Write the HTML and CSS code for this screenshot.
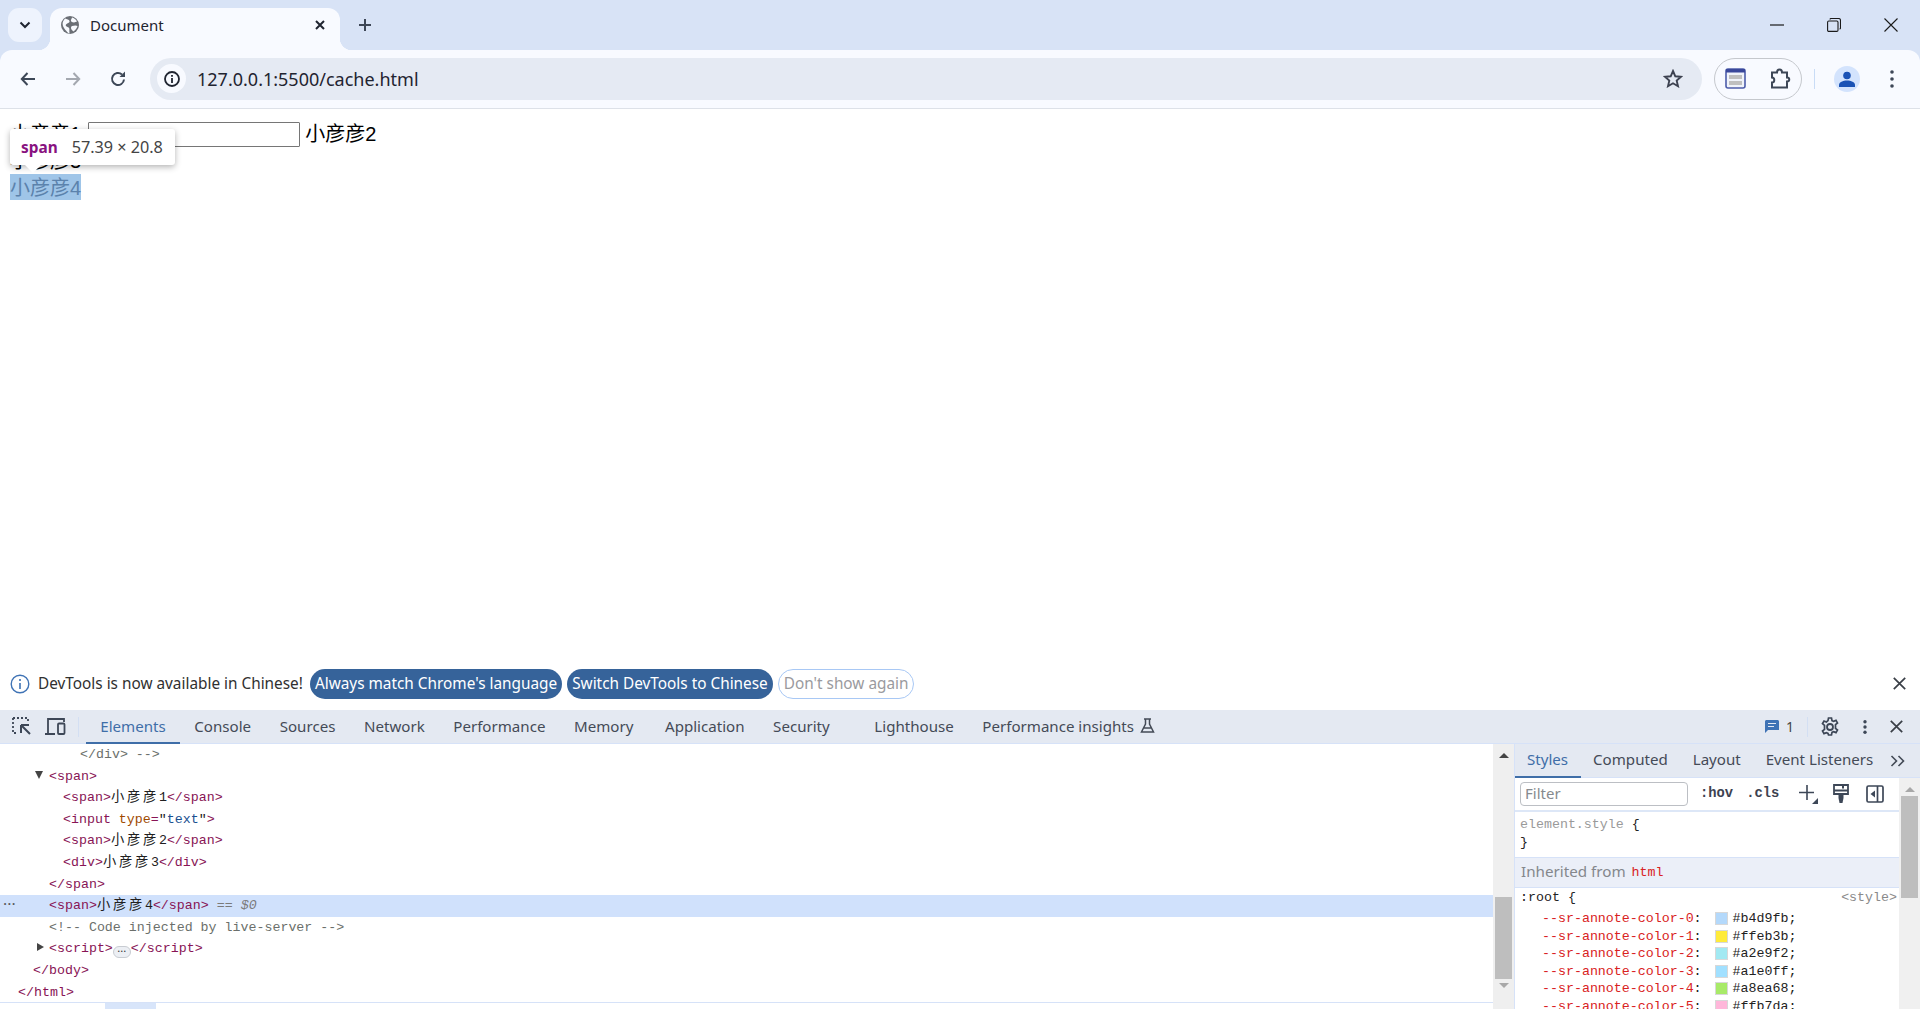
FILE: index.html
```html
<!DOCTYPE html>
<html lang="en">
<head>
<meta charset="utf-8">
<title>Document</title>
<link rel="stylesheet" href="styles.css">
</head>
<body>
<div class="app">
  <header class="tabstrip">
    <button class="tabsearch"><svg width="12" height="8" viewBox="0 0 12 8"><path d="M1.500 1.500 6 6l4.500-4.500" fill="none" stroke="#1f2430" stroke-width="2"/></svg></button>
    <div class="tab">
      <svg class="favicon" width="18" height="18" viewBox="0 0 18 18"><circle cx="9" cy="9" r="9" fill="#6b6f76"/><path d="M4 2.500c2 1 4 .5 4.500 2.500S6 7 5 8.500 6 11 7.500 11.500 8 15 8.500 17 5 15 3 12 1 6 4 2.500zM11 1.500c2 .5 4 2 5 4l-3 1c-2 0-3.500-1-3-2.500s1-1.500 1-2.500zM11 10c2-.5 4-1 5.500 0-.5 2-2 4-4 5.500-1-1-2.500-2-2.500-3.500s.5-1.500 1-2z" fill="#f8faff"/></svg>
      <span class="tabtitle">Document</span>
      <svg class="tabclose" width="10" height="10" viewBox="0 0 10 10"><path d="M1 1l8 8M9 1l-8 8" stroke="#1f2430" stroke-width="2"/></svg>
    </div>
    <svg class="newtab" width="14" height="14" viewBox="0 0 14 14"><path d="M7 1v12M1 7h12" stroke="#3d4757" stroke-width="2"/></svg>
    <div class="winctl">
      <svg width="14" height="2" viewBox="0 0 14 2"><path d="M0 1h14" stroke="#1a1a1a" stroke-width="1.200"/></svg>
      <svg width="14" height="14" viewBox="0 0 14 14"><rect x=".6" y="3" width="10.400" height="10.400" rx="1.200" fill="none" stroke="#1a1a1a" stroke-width="1.100"/><path d="M3 1.500c0-.5.500-1 1-1h7.500c1 0 2 1 2 2V10c0 .5-.5 1-1 1" fill="none" stroke="#1a1a1a" stroke-width="1.100"/></svg>
      <svg width="14" height="14" viewBox="0 0 14 14"><path d="M.5.500l13 13M13.500.500l-13 13" stroke="#1a1a1a" stroke-width="1.100"/></svg>
    </div>
  </header>
  <nav class="toolbar">
    <svg class="navicon" width="16" height="14" viewBox="0 0 16 14"><path d="M15 7H2M7.500 1 1.800 7l5.700 6" fill="none" stroke="#3d4757" stroke-width="2"/></svg>
    <svg class="navicon" width="16" height="14" viewBox="0 0 16 14"><path d="M1 7h13M8.500 1l5.700 6-5.700 6" fill="none" stroke="#a4a8b0" stroke-width="2"/></svg>
    <svg class="navicon" width="16" height="16" viewBox="0 0 16 16"><path d="M14 8.500A6 6 0 1 1 12 3.500" fill="none" stroke="#3d4757" stroke-width="2"/><path d="M9.500 6H15V.5z" fill="#3d4757"/></svg>
    <div class="omnibox">
      <span class="siteinfo"><svg width="16" height="16" viewBox="0 0 16 16"><circle cx="8" cy="8" r="7" fill="none" stroke="#1f2430" stroke-width="1.800"/><path d="M8 7v5M8 4v1.800" stroke="#1f2430" stroke-width="1.800"/></svg></span>
      <span class="url">127.0.0.1:5500/cache.html</span>
      <svg class="star" width="20" height="19" viewBox="0 0 20 19"><path d="M10 2l2.300 5.300 5.700.5-4.300 3.800 1.300 5.600L10 14.300 5 17.200l1.300-5.600L2 7.800l5.700-.5z" fill="none" stroke="#3d4250" stroke-width="1.900"/></svg>
    </div>
    <div class="extpill">
      <svg width="21" height="21" viewBox="0 0 21 21"><rect x="1" y="1" width="19" height="19" rx="2" fill="#f0f3fa" stroke="#4d5dab" stroke-width="1.600"/><rect x="1" y="1" width="19" height="3.500" fill="#39479a"/><rect x="4" y="7" width="13" height="4" fill="#bfbfbf"/><rect x="4" y="13" width="13" height="4" fill="#bfbfbf"/></svg>
      <svg width="22" height="21" viewBox="0 0 22 21"><path d="M2 4.500h5c0-4 5-4 5 0h5v5c3 0 3 4 0 4v6H2v-5c3 0 3-5 0-5z" fill="none" stroke="#3d4757" stroke-width="2"/></svg>
    </div>
    <span class="tooldivider"></span>
    <span class="avatar"><svg width="16" height="16" viewBox="0 0 16 16"><circle cx="8" cy="4.500" r="3.800" fill="#1a52b5"/><path d="M0 16v-2c0-3 4-4.500 8-4.500s8 1.500 8 4.500v2z" fill="#1a52b5"/></svg></span>
    <svg class="kebab" width="4" height="18" viewBox="0 0 4 18"><circle cx="2" cy="2" r="1.800" fill="#3d4757"/><circle cx="2" cy="9" r="1.800" fill="#3d4757"/><circle cx="2" cy="16" r="1.800" fill="#3d4757"/></svg>
  </nav>
  <main class="page">
    <div class="pageline first"><span>小彦彦1</span> <input class="pageinput" type="text"> <span>小彦彦2</span></div>
    <div class="pageline">小彦彦3</div>
    <div class="pageline"><span class="picked">小彦彦4</span></div>
    <div class="tip"><b>span</b><span>57.39 × 20.8</span></div>
  </main>
  <section class="infobar">
    <svg class="infoicon" width="20" height="20" viewBox="0 0 20 20"><circle cx="10" cy="10" r="8.800" fill="none" stroke="#3f73b5" stroke-width="1.400"/><path d="M10 9v6M10 5v2" stroke="#3f73b5" stroke-width="1.600"/></svg>
    <span class="infotext">DevTools is now available in Chinese!</span>
    <button class="pillbtn primary">Always match Chrome's language</button>
    <button class="pillbtn primary">Switch DevTools to Chinese</button>
    <button class="pillbtn ghost">Don't show again</button>
    <svg class="infoclose" width="13" height="13" viewBox="0 0 13 13"><path d="M.8.800l11.400 11.400M12.200.800.800 12.200" stroke="#3a3f47" stroke-width="1.700"/></svg>
  </section>
  <section class="devtabs">
    <svg class="dticon" width="19" height="19" viewBox="0 0 19 19"><path d="M1 1h15v5M1 1v15h5" fill="none" stroke="#3d4757" stroke-width="1.800" stroke-dasharray="2 2"/><path d="M9 8h8M9 8v8M9 8l9 9" fill="none" stroke="#3d4757" stroke-width="2"/></svg>
    <svg class="dticon second" width="21" height="19" viewBox="0 0 21 19"><path d="M0 17h10M3 16V2h16v3" fill="none" stroke="#3d4757" stroke-width="1.800"/><rect x="13" y="6.500" width="6.500" height="10.500" rx="1" fill="none" stroke="#3d4757" stroke-width="1.800"/></svg>
    <span class="dtdivider"></span>
    <div class="tablist">
      <span class="dtab active">Elements</span>
      <span class="dtab">Console</span>
      <span class="dtab">Sources</span>
      <span class="dtab">Network</span>
      <span class="dtab">Performance</span>
      <span class="dtab">Memory</span>
      <span class="dtab application">Application</span>
      <span class="dtab">Security</span>
      <span class="dtab wide">Lighthouse</span>
      <span class="dtab">Performance insights
        <svg class="flask" width="15" height="15" viewBox="0 0 15 15"><path d="M4 1h7M5.500 1v5L1.500 14h12L9.500 6V1M4 10h7" fill="none" stroke="#444b57" stroke-width="1.500"/></svg>
      </span>
    </div>
    <div class="dtright">
      <svg width="14" height="13" viewBox="0 0 14 13"><path d="M0 1.500C0 .7.700 0 1.500 0h11c.8 0 1.500.7 1.500 1.500V10H3l-3 3z" fill="#3f73b5"/><path d="M3 3.500h8M3 6.500h6" stroke="#e4e9f2" stroke-width="1.200"/></svg>
      <span class="issuecount">1</span>
      <span class="dtdivider r"></span>
      <svg class="gear" width="20" height="20" viewBox="0 0 20 20"><circle cx="10" cy="10" r="3" fill="none" stroke="#3d4757" stroke-width="1.800"/><path d="M8.500 1h3l.5 2.600 1.600.8 2.400-1 1.500 2.600-2 1.700v3.600l2 1.700-1.500 2.600-2.400-1-1.600.8-.5 2.600h-3L8 16.400l-1.600-.8-2.400 1-1.500-2.600 2-1.700V8.300l-2-1.700L4 4l2.400 1L8 3.600z" fill="none" stroke="#3d4757" stroke-width="1.700"/></svg>
      <svg class="dots" width="4" height="14" viewBox="0 0 4 14"><circle cx="2" cy="1.800" r="1.700" fill="#3d4757"/><circle cx="2" cy="7" r="1.700" fill="#3d4757"/><circle cx="2" cy="12.200" r="1.700" fill="#3d4757"/></svg>
      <svg class="dtclose" width="13" height="13" viewBox="0 0 13 13"><path d="M.8.800l11.400 11.400M12.200.800.800 12.200" stroke="#3a3f47" stroke-width="1.700"/></svg>
    </div>
  </section>
  <section class="devmain">
    <div class="elements">
      <div class="tree">
        <div class="row l4"><span class="cm">&lt;/div&gt; --&gt;</span></div>
        <div class="row l2"><i class="tri down"></i><span class="tg">&lt;span&gt;</span></div>
        <div class="row l3"><span class="tg">&lt;span&gt;</span><span class="cjk">小彦彦</span>1<span class="tg">&lt;/span&gt;</span></div>
        <div class="row l3"><span class="tg">&lt;input </span><span class="at">type</span><span class="tg">=</span>"<span class="vl">text</span>"<span class="tg">&gt;</span></div>
        <div class="row l3"><span class="tg">&lt;span&gt;</span><span class="cjk">小彦彦</span>2<span class="tg">&lt;/span&gt;</span></div>
        <div class="row l3"><span class="tg">&lt;div&gt;</span><span class="cjk">小彦彦</span>3<span class="tg">&lt;/div&gt;</span></div>
        <div class="row l2"><span class="tg">&lt;/span&gt;</span></div>
        <div class="row l2 selected"><span class="rowdots">•••</span><span class="tg">&lt;span&gt;</span><span class="cjk">小彦彦</span>4<span class="tg">&lt;/span&gt;</span><span class="eq"> == $0</span></div>
        <div class="row l2"><span class="cm">&lt;!-- Code injected by live-server --&gt;</span></div>
        <div class="row l2"><i class="tri right"></i><span class="tg">&lt;script&gt;</span><span class="more">•••</span><span class="tg">&lt;/script&gt;</span></div>
        <div class="row l1"><span class="tg">&lt;/body&gt;</span></div>
        <div class="row l0"><span class="tg">&lt;/html&gt;</span></div>
      </div>
      <div class="breadcrumb"><span class="crumb"></span></div>
    </div>
    <div class="vscroll">
      <i class="up"></i>
      <span class="vtrack"><span class="vthumb"></span></span>
      <i class="dn"></i>
    </div>
    <aside class="sidebar">
      <div class="sidetabs">
        <span class="stab active">Styles</span>
        <span class="stab">Computed</span>
        <span class="stab">Layout</span>
        <span class="stab">Event Listeners</span>
        <svg class="chev" width="16" height="12" viewBox="0 0 16 12"><path d="M1.500 1l5 5-5 5M8.500 1l5 5-5 5" fill="none" stroke="#444b57" stroke-width="1.600"/></svg>
      </div>
      <div class="sidebody">
        <div class="stylespane">
          <div class="filterbar">
            <span class="filter">Filter</span>
            <span class="hov">:hov</span>
            <span class="cls">.cls</span>
            <svg class="plus" width="20" height="20" viewBox="0 0 20 20"><path d="M8 1v15M0 8.500h15" stroke="#3d4757" stroke-width="1.600"/><path d="M19 14v6h-6z" fill="#3d4757"/></svg>
            <svg class="brush" width="16" height="19" viewBox="0 0 16 19"><path d="M1 1h14v9H1z" fill="none" stroke="#3d4757" stroke-width="1.800"/><path d="M1 6.500h14" stroke="#3d4757" stroke-width="2"/><path d="M10 1v3.500" stroke="#3d4757" stroke-width="2"/><path d="M5.500 10h5v4l-1 5h-3l-1-5z" fill="#3d4757"/></svg>
            <svg class="sideicon" width="18" height="18" viewBox="0 0 18 18"><rect x="1" y="1" width="16" height="16" rx="1.500" fill="none" stroke="#3d4757" stroke-width="1.700"/><path d="M11.500 1v16" stroke="#3d4757" stroke-width="1.700"/><path d="M9 5.500v7L4.500 9z" fill="#3d4757"/></svg>
          </div>
          <div class="rule first"><div><span class="sel">element.style</span> {</div><div>}</div></div>
          <div class="inherited">Inherited from <span class="mono">html</span></div>
          <div class="rule root">
            <div class="rulehead"><span>:root {</span><span class="src">&lt;style&gt;</span></div>
            <div class="prop"><span class="pn">--sr-annote-color-0</span>: <i class="sw c0"></i>#b4d9fb;</div>
            <div class="prop"><span class="pn">--sr-annote-color-1</span>: <i class="sw c1"></i>#ffeb3b;</div>
            <div class="prop"><span class="pn">--sr-annote-color-2</span>: <i class="sw c2"></i>#a2e9f2;</div>
            <div class="prop"><span class="pn">--sr-annote-color-3</span>: <i class="sw c3"></i>#a1e0ff;</div>
            <div class="prop"><span class="pn">--sr-annote-color-4</span>: <i class="sw c4"></i>#a8ea68;</div>
            <div class="prop"><span class="pn">--sr-annote-color-5</span>: <i class="sw c5"></i>#ffb7da;</div>
          </div>
        </div>
        <div class="sscroll">
          <i class="up light"></i>
          <span class="sthumb"></span>
        </div>
      </div>
    </aside>
  </section>
</div>
</body>
</html>
```
FILE: styles.css
```css
* { box-sizing: border-box; }
html, body { margin: 0; height: 100%; overflow: hidden; }
body { font-family: "Noto Sans", "Noto Sans CJK SC", sans-serif; background: #d8e3f6; color: #1f1f1f; }
button { font: inherit; border: 0; padding: 0; }
svg { display: block; flex: none; }
i { font-style: normal; }
.app { display: flex; flex-direction: column; height: 1009px; }

.tabstrip { height: 50px; display: flex; align-items: flex-start; padding: 8px 0 0 8px; flex: none; }
.tabsearch { width: 34px; height: 34px; border-radius: 11px; background: #eef3fd; display: flex; align-items: center; justify-content: center; }
.tab { margin-left: 8px; width: 290px; height: 42px; background: #f8faff; border-radius: 12px 12px 0 0; display: flex; align-items: center; padding: 0 0 8px 11px; position: relative; }
.tab::before, .tab::after { content: ""; position: absolute; bottom: 0; width: 12px; height: 12px; }
.tab::before { left: -12px; background: radial-gradient(circle at 0 0, transparent 12px, #f8faff 12.500px); }
.tab::after { right: -12px; background: radial-gradient(circle at 100% 0, transparent 12px, #f8faff 12.500px); }
.tabtitle { margin-left: 11px; font-size: 15px; color: #1f2430; flex: 1; }
.tabclose { margin-right: 15px; }
.newtab { margin: 10px 0 0 18px; }
.winctl { margin-left: auto; display: flex; align-items: center; gap: 43px; padding: 10px 22px 0 0; }

.toolbar { height: 59px; flex: none; background: #f8faff; border-radius: 12px 12px 0 0; border-bottom: 1px solid #dde1e8; display: flex; align-items: center; padding: 0 19px 1px 20px; }
.navicon { margin-right: 29px; }
.navicon + .navicon + .navicon { margin-right: 24px; }
.omnibox { width: 1552px; height: 42px; border-radius: 21px; background: #e5eaf3; display: flex; align-items: center; padding: 0 19px 0 7px; }
.siteinfo { width: 29px; height: 29px; border-radius: 50%; background: #f8faff; display: flex; align-items: center; justify-content: center; }
.url { margin-left: 11px; font-size: 18px; color: #1f2430; flex: 1; }
.extpill { margin-left: 12px; width: 88px; height: 42px; border: 1.500px solid #c5c8cd; border-radius: 21px; display: flex; align-items: center; justify-content: space-between; padding: 0 9px 0 10px; }
.tooldivider { width: 1px; height: 20px; background: #c9dcf6; margin-left: 12px; }
.avatar { margin-left: 19px; width: 26px; height: 26px; border-radius: 50%; background: #d3e3fd; display: flex; align-items: center; justify-content: center; overflow: hidden; }
.kebab { margin-left: 30px; }

.page { flex: 1; min-height: 0; background: #fff; padding: 12px 10px 0; color: #000; font-size: 20px; position: relative; font-family: "Liberation Sans", "Noto Sans CJK SC", sans-serif; }
.pageline { height: 26px; line-height: 26px; }
.pageline.first { height: 27px; }
.pageinput { width: 212px; height: 25px; border: 1px solid #767676; border-radius: 1px; background: #fff; padding: 0; margin: 1px 0 0 1px; vertical-align: top; }
.picked { display: inline-block; background: #9fc5e8; color: #5b82ac; height: 26px; line-height: 28px; vertical-align: top; }
.tip { position: absolute; left: 10px; top: 20px; width: 165px; height: 36px; background: #fff; border-radius: 3px; box-shadow: 0 2px 6px rgba(0,0,0,.3); display: flex; align-items: center; gap: 14px; padding: 0 0 0 11px; font-size: 15.400px; font-family: "Noto Sans", sans-serif; color: #444; }
.tip span { font-size: 16.200px; }
.tip::after { content: ""; position: absolute; left: 15px; top: 36px; border: 8px solid transparent; border-top-color: #fff; border-bottom: 0; }
.tip b { color: #881280; font-weight: 700; }

.infobar { height: 50px; flex: none; background: #fff; display: flex; align-items: center; padding: 0 14px 3px 10px; font-size: 15.350px; }
.infotext { margin-left: 8px; color: #303030; position: relative; top: -1px; }
.pillbtn { height: 30px; border-radius: 15px; display: flex; align-items: center; justify-content: center; margin-left: 5px; font-size: 15.350px; padding-bottom: 2px; }
.primary { background: #36639a; color: #fff; padding-left: 5px; padding-right: 5px; }
.infotext + .primary { margin-left: 7px; }
.ghost { background: #fff; border: 1px solid #a8c8f5; color: #9a9a9e; padding-left: 5px; padding-right: 5px; }
.infoclose { margin-left: auto; }

.devtabs { height: 34px; flex: none; background: #e4e9f2; border-bottom: 1px solid #d6e2f8; display: flex; align-items: center; padding-left: 12px; }
.dticon.second { margin-left: 14px; }
.dtdivider { width: 1px; height: 20px; background: #d3dff3; margin-left: 12px; }
.dtdivider.r { margin: 0 12px 0 13px; height: 20px; }
.tablist { display: flex; height: 100%; margin-left: 7px; }
.dtab { display: flex; align-items: center; gap: 6px; padding: 0 14.300px 3px; font-size: 15.100px; color: #444b57; height: 34px; }
.dtab.active { color: #3f6ea8; border-bottom: 2px solid #3f6ea8; padding-bottom: 1px; }
.dtab.application { margin-left: 3px; }
.dtab.wide { margin-left: 16px; }
.dtright { margin-left: auto; display: flex; align-items: center; padding-right: 17px; font-size: 14px; color: #444; }
.issuecount { margin-left: 7px; }
.dots { margin-left: 23px; }
.dtclose { margin-left: 23px; }

.devmain { height: 265px; flex: none; display: flex; background: #fff; }
.elements { width: 1493px; display: flex; flex-direction: column; font-family: "Liberation Mono", "Noto Sans CJK SC", monospace; font-size: 13.300px; color: #202020; }
.tree { height: 258px; overflow: hidden; }
.row { height: 21.600px; line-height: 21.600px; white-space: pre; position: relative; }
.l0 { padding-left: 18px; } .l1 { padding-left: 33px; } .l2 { padding-left: 49px; } .l3 { padding-left: 63px; } .l4 { padding-left: 80px; }
.tg { color: #881455; }
.at { color: #a04a00; }
.vl { color: #1a4f8f; }
.cm { color: #6b6f6b; }
.cjk { letter-spacing: 2.700px; }
.eq { color: #7a7a7a; font-style: italic; }
.selected { background: #d0e1fc; }
.rowdots { position: absolute; left: 3px; top: -1px; font-size: 7px; letter-spacing: 0; color: #555; }
.tri { position: absolute; }
.tri.down { left: 35px; top: 5px; border: 4.500px solid transparent; border-top: 8px solid #444; border-bottom: 0; }
.tri.right { left: 37px; top: 5px; border: 4.500px solid transparent; border-left: 7px solid #444; border-right: 0; }
.more { display: inline-block; width: 18px; height: 12px; line-height: 10px; border-radius: 6px; background: #eceff4; border: 1px solid #c8ccd2; text-align: center; font-size: 5px; vertical-align: -1px; color: #333; }
.breadcrumb { border-top: 1px solid #d6e2f8; flex: 1; }
.crumb { display: block; margin-left: 105px; width: 51px; height: 100%; background: #d8e5fa; }

.vscroll { width: 21px; background: #efefef; display: flex; flex-direction: column; align-items: center; flex: none; padding-top: 9px; }
.up { width: 0; height: 0; border: 5px solid transparent; border-bottom: 5px solid #444; border-top: 0; flex: none; }
.up.light { border-bottom-color: #a8a8a8; }
.dn { width: 0; height: 0; border: 5px solid transparent; border-top: 5px solid #a8a8a8; border-bottom: 0; flex: none; margin-top: 4px; }
.vtrack { height: 221px; width: 17px; display: flex; align-items: flex-end; }
.vthumb { display: block; width: 17px; height: 82px; background: #bebebe; }

.sidebar { flex: 1; border-left: 1px solid #d6e2f8; display: flex; flex-direction: column; min-width: 0; }
.sidetabs { height: 34px; flex: none; background: #e4e9f2; border-bottom: 1px solid #d6e2f8; display: flex; align-items: center; font-size: 15.100px; color: #444b57; }
.stab { height: 34px; display: flex; align-items: center; padding: 0 12.500px 3px; }
.stab.active { color: #3f6ea8; border-bottom: 2px solid #3f6ea8; padding-bottom: 1px; padding-left: 12px; }
.chev { margin-left: 4px; }
.sidebody { flex: 1; display: flex; min-height: 0; }
.stylespane { flex: 1; min-width: 0; overflow: hidden; font-family: "Liberation Mono", monospace; font-size: 13.300px; color: #222; }
.filterbar { height: 34px; border-bottom: 2px solid #dde7f7; display: flex; align-items: center; padding: 0 0 1px 5px; }
.filter { width: 168px; height: 24px; border: 1px solid #bcbfc4; border-radius: 4px; padding-left: 4px; font-family: "Noto Sans", sans-serif; font-size: 15px; line-height: 21px; color: #868a8e; }
.hov, .cls { font-weight: 700; font-size: 13.800px; color: #3d4250; }
.hov { margin-left: 12px; }
.cls { margin-left: 13px; }
.plus { margin-left: 20px; }
.brush { margin-left: 14px; }
.sideicon { margin-left: 17px; }
.rule { padding-left: 5px; }
.rule.first { height: 45px; padding-top: 4px; line-height: 18px; }
.sel { color: #9a9a9a; }
.inherited { height: 31px; background: #ebeff8; border-top: 1px solid #d6e2f8; border-bottom: 1px solid #d6e2f8; display: flex; align-items: center; gap: 6px; padding: 0 0 3px 6px; font-family: "Noto Sans", sans-serif; font-size: 15.200px; color: #84878c; }
.mono { font-family: "Liberation Mono", monospace; font-size: 13.300px; color: #d92222; position: relative; top: 1px; }
.rule.root { margin-top: -1px; }
.rulehead { display: flex; justify-content: space-between; height: 23px; line-height: 22px; padding-right: 2px; }
.src { color: #8a8a8a; }
.prop { height: 17.500px; line-height: 17.500px; padding-left: 22px; white-space: pre; display: flex; align-items: center; }
.pn { color: #d92222; }
.sw { width: 13px; height: 13px; margin: 0 5px; border: 1px solid #d8d8d8; flex: none; }
.c0 { background: #b4d9fb; } .c1 { background: #ffeb3b; } .c2 { background: #a2e9f2; } .c3 { background: #a1e0ff; } .c4 { background: #a8ea68; } .c5 { background: #ffb7da; }
.sscroll { width: 21px; flex: none; background: #f0f0f0; display: flex; flex-direction: column; align-items: center; padding-top: 9px; }
.sthumb { display: block; width: 17px; height: 102px; background: #bebebe; margin-top: 4px; }
```
